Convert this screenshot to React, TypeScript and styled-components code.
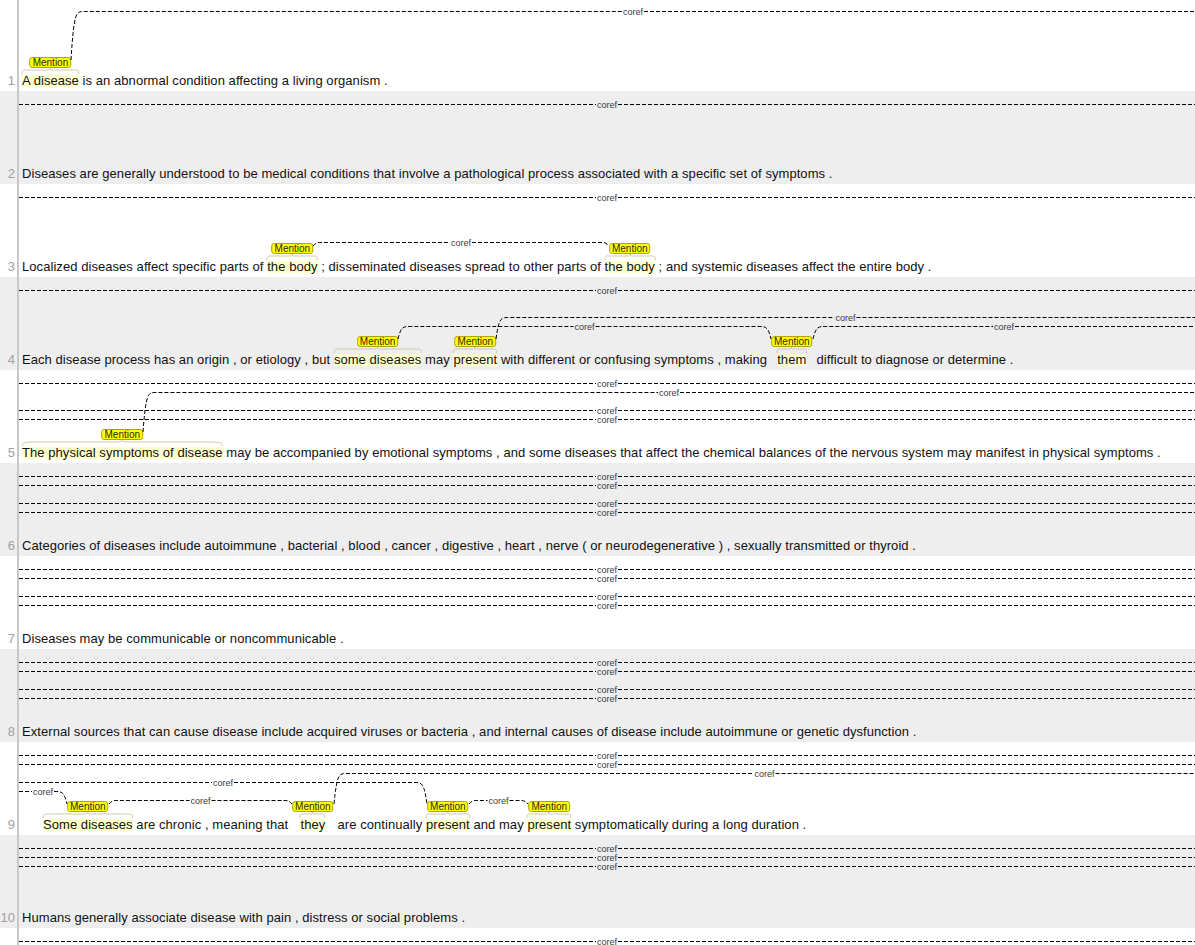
import React, { useLayoutEffect, useRef, useState } from 'react'
import styled, { createGlobalStyle } from 'styled-components'

const GlobalStyle = createGlobalStyle`
  body {
    margin: 0;
    overflow: hidden;
    background: #fff;
    font-family: "Liberation Sans", Arial, sans-serif;
    font-size: 13px;
    color: #111;
  }
`

// left edge of the text area and right edge of the canvas, in page px
const EDGE_L = 19
const EDGE_R = 1195
// where arcs leave a Mention label, in row-local px
const TAG_Y = 62

type Token = string | { m: string; minw?: number; ml?: number }
// a / b are indexes of the mentions in the row; missing = row edge
type Arc = { y: number; a?: number; b?: number }
type Sentence = { tokens: Token[]; arcs: Arc[]; hideNo?: boolean }
type Edge = { l: number; r: number }

const full = (...ys: number[]): Arc[] => ys.map((y) => ({ y }))

const sentences: Sentence[] = [
  {
    tokens: [{ m: 'A disease' }, ' is an abnormal condition affecting a living organism .'],
    arcs: [{ y: 13, a: 0 }],
  },
  {
    tokens: ['Diseases are generally understood to be medical conditions that involve a pathological process associated with a specific set of symptoms .'],
    arcs: full(13),
  },
  {
    tokens: [
      'Localized diseases affect specific parts of ',
      { m: 'the body' },
      ' ; disseminated diseases spread to other parts of ',
      { m: 'the body' },
      ' ; and systemic diseases affect the entire body .',
    ],
    arcs: [...full(13), { y: 58, a: 0, b: 1 }],
  },
  {
    tokens: [
      'Each disease process has an origin , or etiology , but ',
      { m: 'some diseases' },
      ' may ',
      { m: 'present' },
      ' with different or confusing symptoms , making ',
      { m: 'them', minw: 42 },
      ' difficult to diagnose or determine .',
    ],
    arcs: [...full(13), { y: 40, a: 1 }, { y: 49, a: 0, b: 2 }, { y: 49, a: 2 }],
  },
  {
    tokens: [
      { m: 'The physical symptoms of disease' },
      ' may be accompanied by emotional symptoms , and some diseases that affect the chemical balances of the nervous system may manifest in physical symptoms .',
    ],
    arcs: [...full(13), { y: 22, a: 0 }, ...full(40, 49)],
  },
  {
    tokens: ['Categories of diseases include autoimmune , bacterial , blood , cancer , digestive , heart , nerve ( or neurodegenerative ) , sexually transmitted or thyroid .'],
    arcs: full(13, 22, 40, 49),
  },
  {
    tokens: ['Diseases may be communicable or noncommunicable .'],
    arcs: full(13, 22, 40, 49),
  },
  {
    tokens: ['External sources that can cause disease include acquired viruses or bacteria , and internal causes of disease include autoimmune or genetic dysfunction .'],
    arcs: full(13, 22, 40, 49),
  },
  {
    tokens: [
      { m: 'Some diseases', ml: 21 },
      ' are chronic , meaning that ',
      { m: 'they', minw: 42 },
      ' are continually ',
      { m: 'present' },
      ' and may ',
      { m: 'present' },
      ' symptomatically during a long duration .',
    ],
    arcs: [
      ...full(13, 22),
      { y: 31, a: 1 },
      { y: 40, b: 2 },
      { y: 49, b: 0 },
      { y: 58, a: 0, b: 1 },
      { y: 58, a: 2, b: 3 },
    ],
  },
  {
    tokens: ['Humans generally associate disease with pain , distress or social problems .'],
    arcs: full(13, 22, 31),
  },
  {
    tokens: [''],
    arcs: full(13),
    hideNo: true,
  },
]

const Page = styled.div`
  margin-top: -2px;
`

const Row = styled.div<{ $shade: boolean }>`
  position: relative;
  display: flex;
  height: 93px;
  background: ${(p) => (p.$shade ? '#eeeeee' : '#ffffff')};
`

const LineNo = styled.div`
  width: 19px;
  flex-shrink: 0;
  box-sizing: border-box;
  padding: 0 2px 4px 0;
  border-right: 2px solid #c8c8c8;
  display: flex;
  align-items: flex-end;
  justify-content: flex-end;
  line-height: 12px;
  color: #a0a0a0;
`

const Line = styled.div`
  flex: 1;
  display: flex;
  align-items: flex-end;
  padding: 0 0 4px 3px;
  line-height: 12px;
  letter-spacing: 0.06px;
  white-space: pre;
`

const ArcLayer = styled.svg`
  position: absolute;
  left: 0;
  top: 0;
  overflow: visible;
  pointer-events: none;
`

const ArcLabel = styled.text`
  font-family: "Liberation Sans", Arial, sans-serif;
  font-size: 9px;
  fill: #3a3a44;
`

const Slot = styled.span<{ $minw?: number; $ml?: number }>`
  display: inline-block;
  text-align: center;
  min-width: ${(p) => p.$minw ?? 0}px;
  margin-left: ${(p) => p.$ml ?? 0}px;
`

const Word = styled.span`
  position: relative;
  display: inline-block;
  background: #ffffcc;
`

const Tag = styled.span`
  position: absolute;
  left: 50%;
  bottom: calc(100% + 7px);
  transform: translateX(-50%);
  height: 9px;
  padding: 0 2px;
  border: 1px solid #a9a900;
  border-radius: 3px;
  background: #ffff00;
  color: #2a2a10;
  font-size: 10px;
  line-height: 9px;
  letter-spacing: 0;
  white-space: nowrap;
`

const Brace = styled.svg`
  position: absolute;
  left: 0;
  bottom: calc(100% + 1px);
  width: 100%;
  height: 6px;
  overflow: visible;
`

const Mention = ({
  text,
  minw,
  ml,
  tagRef,
}: {
  text: string
  minw?: number
  ml?: number
  tagRef: (el: HTMLSpanElement | null) => void
}) => (
  <Slot $minw={minw} $ml={ml}>
    <Word>
      <Tag ref={tagRef}>Mention</Tag>
      <Brace viewBox="0 0 100 6" preserveAspectRatio="none">
        <path
          d="M0,6 C0,2 2,2 8,2 L44,2 C49,2 50,2 50,0 C50,2 51,2 56,2 L92,2 C98,2 100,2 100,6"
          fill="none"
          stroke="#cfc9a4"
          strokeWidth={1}
          vectorEffect="non-scaling-stroke"
        />
      </Brace>
      {text}
    </Word>
  </Slot>
)

const arcPaths = (arc: Arc, edges: Edge[]) => {
  const y = arc.y + 0.5
  const from = arc.a !== undefined ? edges[arc.a] : undefined
  const to = arc.b !== undefined ? edges[arc.b] : undefined
  const x1 = from ? Math.round(from.r) : EDGE_L
  const x2 = to ? Math.round(to.l) : EDGE_R
  const cx = (x1 + x2) / 2
  const d = TAG_Y - arc.y > 8 ? 13 : 8
  const left = from
    ? `M${x1},${TAG_Y} C${x1 + 3},${y} ${x1 + 5},${y} ${x1 + d},${y} L${cx - 11},${y}`
    : `M${x1},${y} L${cx - 11},${y}`
  const right = to
    ? `M${cx + 11},${y} L${x2 - d},${y} C${x2 - 5},${y} ${x2 - 3},${y} ${x2},${TAG_Y}`
    : `M${cx + 11},${y} L${x2},${y}`
  return { left, right, cx }
}

const Arcs = ({ arcs, edges }: { arcs: Arc[]; edges: Edge[] }) => (
  <ArcLayer width={EDGE_R} height={93}>
    {arcs.map((arc, i) => {
      const needs = [arc.a, arc.b].filter((v) => v !== undefined) as number[]
      if (needs.some((n) => !edges[n])) return null
      const { left, right, cx } = arcPaths(arc, edges)
      return (
        <g key={i}>
          <path d={left} fill="none" stroke="#000" strokeWidth={1} strokeDasharray="4,2" />
          <path d={right} fill="none" stroke="#000" strokeWidth={1} strokeDasharray="4,2" />
          <ArcLabel x={cx} y={arc.y + 3.5} textAnchor="middle">
            coref
          </ArcLabel>
        </g>
      )
    })}
  </ArcLayer>
)

const SentenceRow = ({ s, index }: { s: Sentence; index: number }) => {
  const rowRef = useRef<HTMLDivElement>(null)
  const tags = useRef<(HTMLSpanElement | null)[]>([])
  const [edges, setEdges] = useState<Edge[]>([])

  useLayoutEffect(() => {
    const measure = () => {
      if (!rowRef.current) return
      const row = rowRef.current.getBoundingClientRect()
      setEdges(
        tags.current.map((el) => {
          const b = el!.getBoundingClientRect()
          return { l: b.left - row.left, r: b.right - row.left }
        }),
      )
    }
    measure()
    document.fonts?.ready.then(measure)
  }, [])

  let m = -1
  return (
    <Row ref={rowRef} $shade={index % 2 === 1}>
      <LineNo>{s.hideNo ? '' : index + 1}</LineNo>
      <Line>
        {s.tokens.map((t, j) => {
          if (typeof t === 'string') return <span key={j}>{t}</span>
          m += 1
          const k = m
          return (
            <Mention
              key={j}
              text={t.m}
              minw={t.minw}
              ml={t.ml}
              tagRef={(el) => {
                tags.current[k] = el
              }}
            />
          )
        })}
      </Line>
      <Arcs arcs={s.arcs} edges={edges} />
    </Row>
  )
}

export default function App() {
  return (
    <Page>
      <GlobalStyle />
      {sentences.map((s, i) => (
        <SentenceRow key={i} s={s} index={i} />
      ))}
    </Page>
  )
}
